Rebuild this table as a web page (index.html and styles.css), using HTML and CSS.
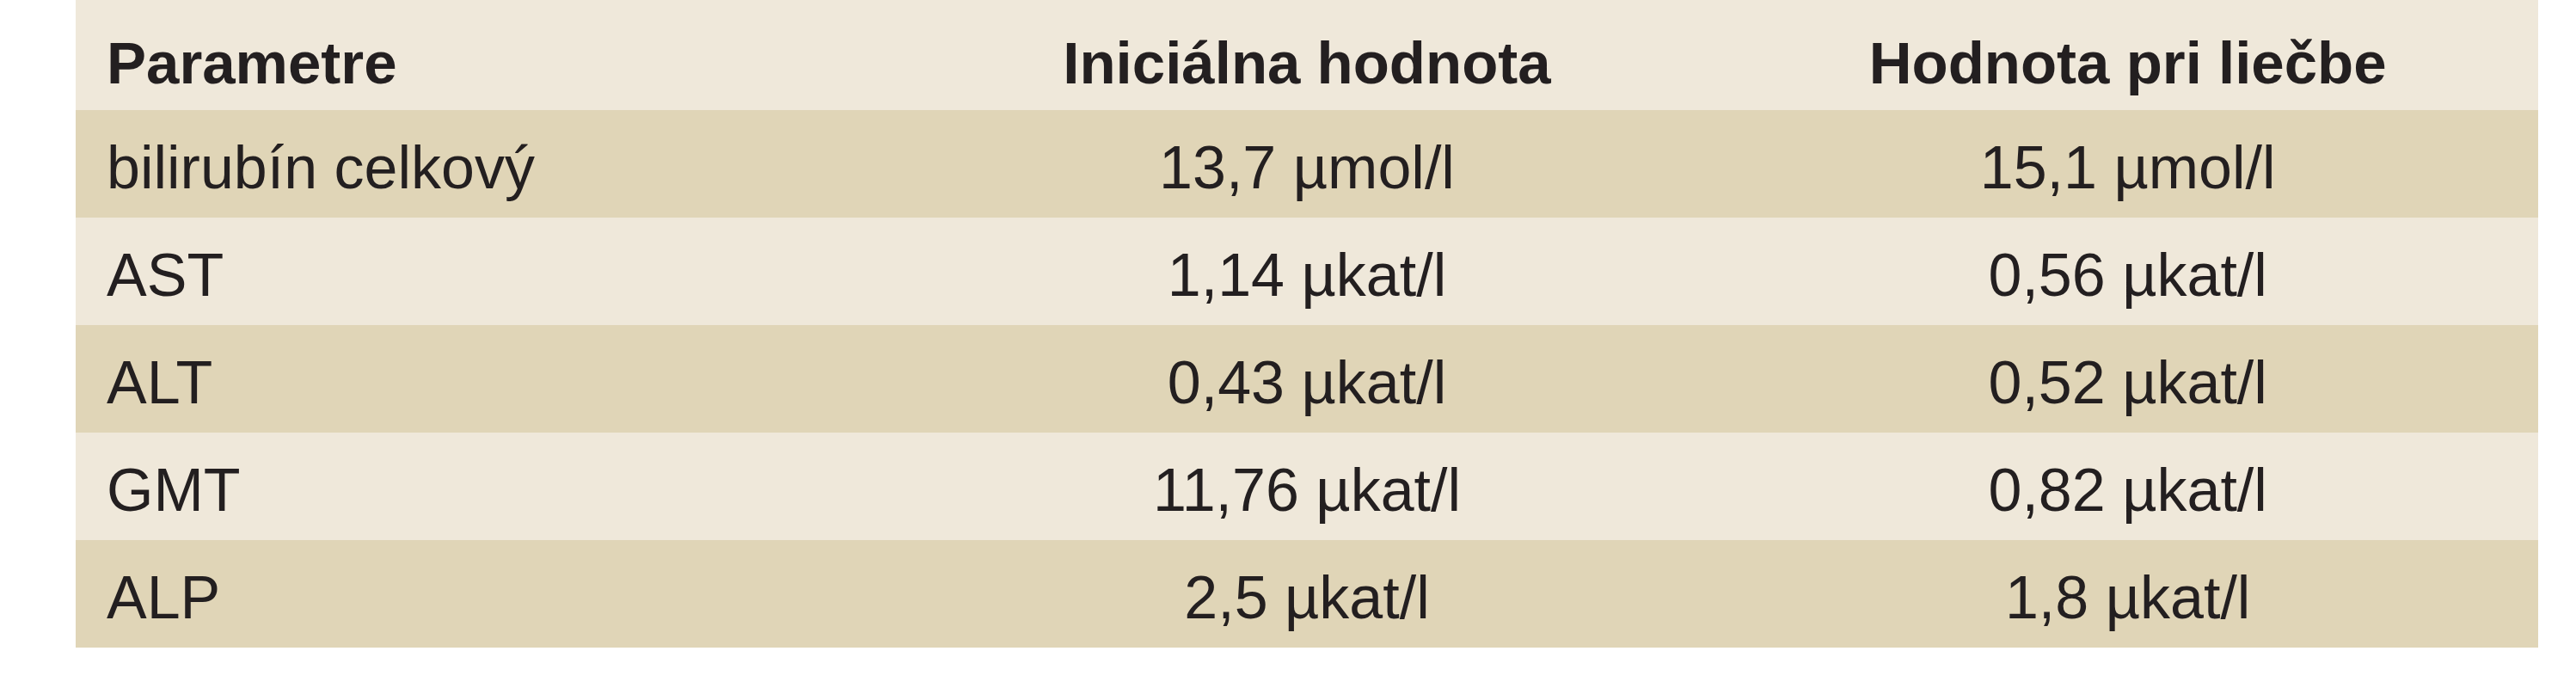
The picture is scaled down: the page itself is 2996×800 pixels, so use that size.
FILE: index.html
```html
<!DOCTYPE html>
<html lang="sk">
<head>
<meta charset="utf-8">
<title>Parametre</title>
<link rel="stylesheet" href="styles.css">
</head>
<body>
<div class="wrap">
<table class="lab">
<colgroup><col class="c"><col class="c"><col class="c"></colgroup>
<thead>
<tr><th class="left">Parametre</th><th>Iniciálna hodnota</th><th>Hodnota pri liečbe</th></tr>
</thead>
<tbody>
<tr class="dark"><td class="left">bilirubín celkový</td><td>13,7 µmol/l</td><td>15,1 µmol/l</td></tr>
<tr class="light"><td class="left">AST</td><td>1,14 µkat/l</td><td>0,56 µkat/l</td></tr>
<tr class="dark"><td class="left">ALT</td><td>0,43 µkat/l</td><td>0,52 µkat/l</td></tr>
<tr class="light"><td class="left">GMT</td><td>11,76 µkat/l</td><td>0,82 µkat/l</td></tr>
<tr class="dark"><td class="left">ALP</td><td>2,5 µkat/l</td><td>1,8 µkat/l</td></tr>
</tbody>
</table>
</div>
</body>
</html>
```
FILE: styles.css
```css
html, body {
  margin: 0;
  padding: 0;
  background: #ffffff;
}
.wrap {
  padding-left: 88px;
}
.lab {
  width: 2864px;
  border-collapse: collapse;
  table-layout: fixed;
  font-family: "Liberation Sans", Arial, sans-serif;
  color: #231f20;
}
.lab th, .lab td {
  text-align: center;
  line-height: 80px;
  white-space: nowrap;
  padding: 0 36px;
}
.lab th {
  font-size: 69px;
  font-weight: 700;
  padding-top: 34px;
  padding-bottom: 14px;
  background: #efe8da;
}
.lab td {
  font-size: 70px;
  font-weight: 400;
  padding-top: 27px;
  padding-bottom: 18px;
}
.lab .left {
  text-align: left;
}
.dark td {
  background: #e0d5b7;
}
.light td {
  background: #efe8da;
}
```
